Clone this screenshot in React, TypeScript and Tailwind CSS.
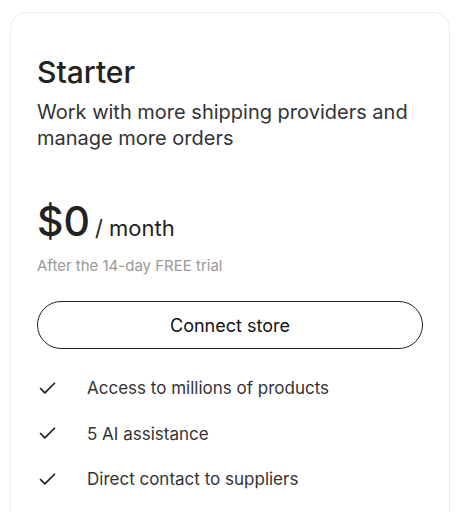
import { Check } from "lucide-react";

const features = [
  "Access to millions of products",
  "5 AI assistance",
  "Direct contact to suppliers",
];

export default function App() {
  return (
    <div
      className="min-h-screen bg-white pl-[10px] pt-[12px]"
      style={{ fontFamily: "Inter, 'Noto Sans', sans-serif" }}
    >
      <div className="w-[440px] rounded-2xl border border-[#ececec] bg-white px-[26px] pt-[41px] pb-10 text-[#222]">
        {/* Plan header */}
        <h2 className="text-[30px] font-medium leading-[36px]">Starter</h2>
        <p className="mt-[9px] text-[20px] leading-[26px] text-[#333]">
          Work with more shipping providers and manage more orders
        </p>

        {/* Price */}
        <div className="mt-[46px] flex items-baseline gap-[5px]">
          <span className="text-[41px] font-medium leading-[48px]">$0</span>
          <span className="text-[22px] leading-[30px] text-[#222]">/ month</span>
        </div>
        <p className="mt-[11px] text-[15px] leading-[20px] text-[#999]">
          After the 14-day FREE trial
        </p>

        <button className="mt-[25px] flex h-[48px] w-full items-center justify-center rounded-full border border-[#222] text-[18px] text-[#111]">
          Connect store
        </button>

        {/* Features */}
        <ul className="mt-[26px] flex flex-col gap-[19.5px]">
          {features.map((f) => (
            <li key={f} className="flex items-center gap-[29px]">
              <Check className="h-[21px] w-[21px] text-[#222]" strokeWidth={2} />
              <span className="text-[17px] leading-[26px] text-[#333]">{f}</span>
            </li>
          ))}
        </ul>
      </div>
    </div>
  );
}
